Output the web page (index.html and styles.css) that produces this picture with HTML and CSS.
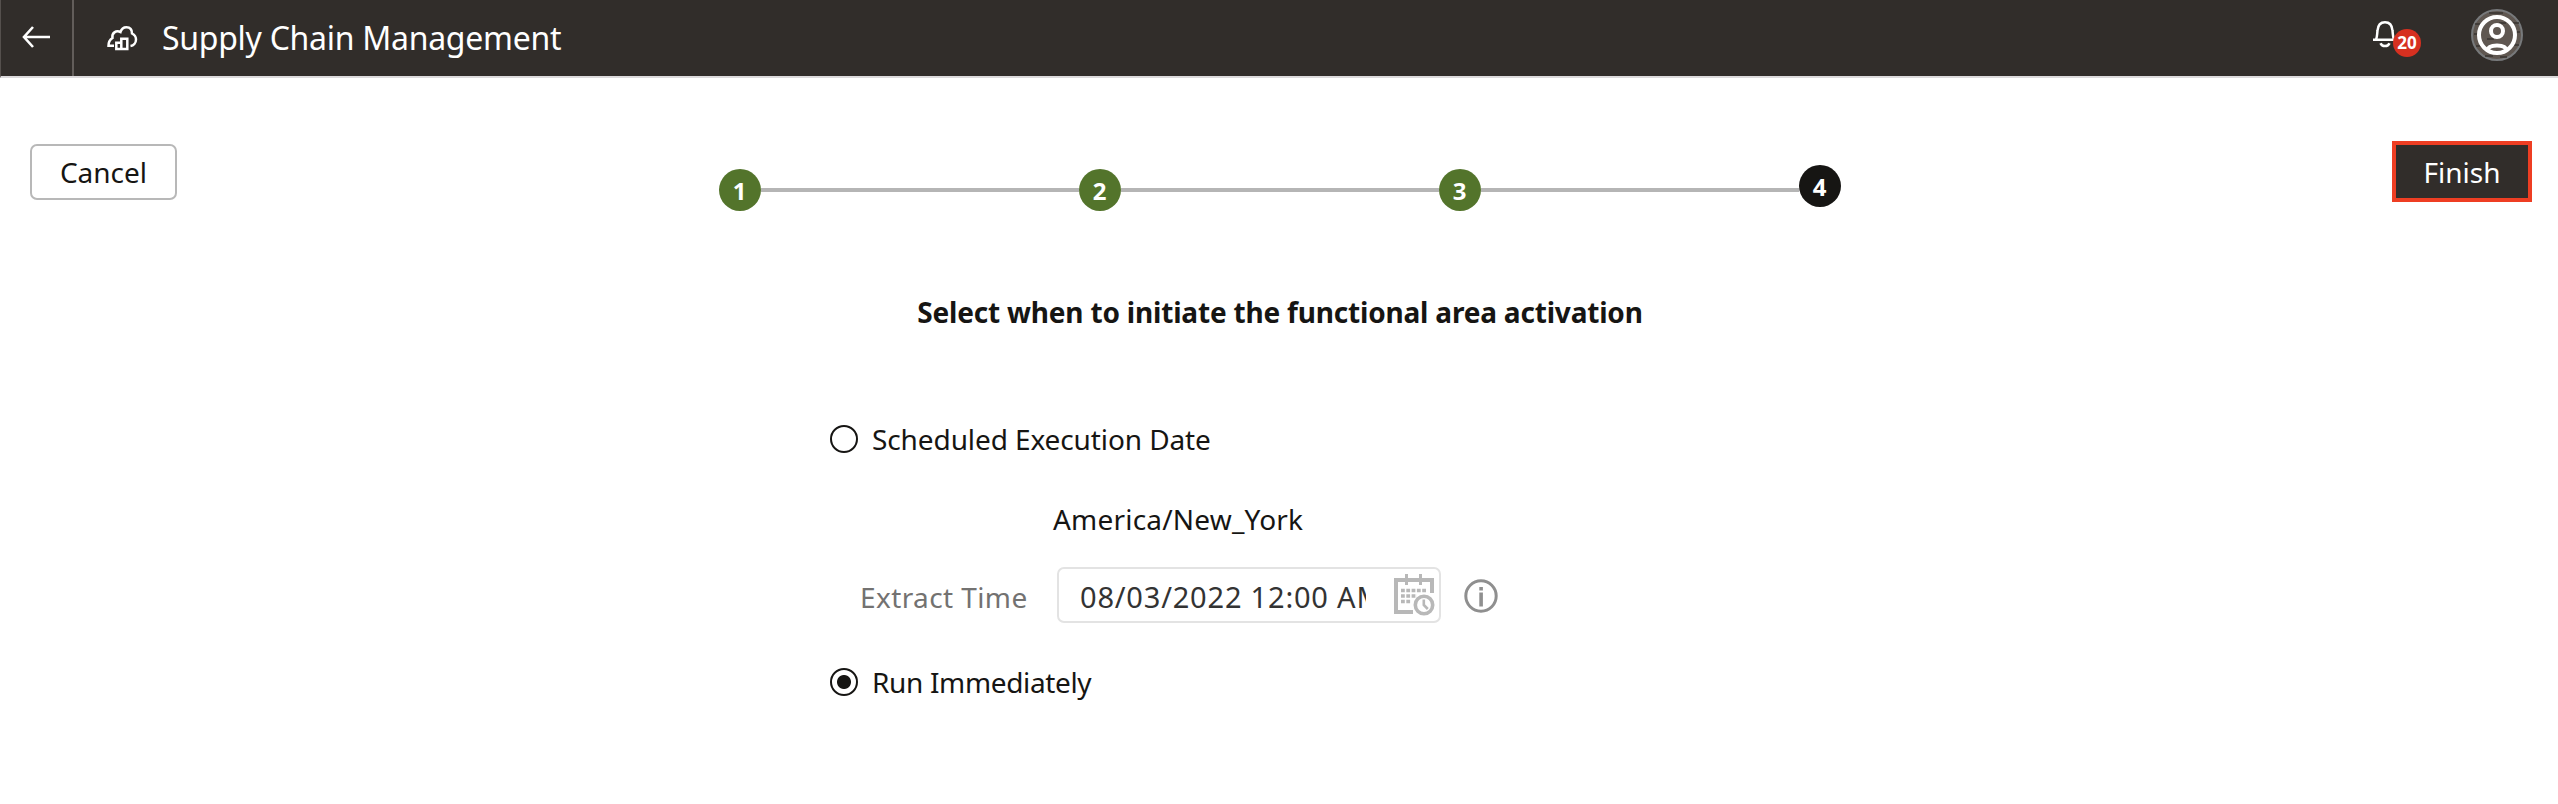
FILE: index.html
```html
<!DOCTYPE html>
<html lang="en">
<head>
<meta charset="utf-8">
<title>Supply Chain Management</title>
<link rel="stylesheet" href="styles.css">
</head>
<body>
<header class="topbar">
  <a class="back" aria-label="Back"><svg width="30" height="24" viewBox="0 0 30 24"><path d="M12 2 3 12l9 10M3 12h26" fill="none" stroke="#fff" stroke-width="2.600"/></svg></a>
  <svg class="logo" width="32" height="28" viewBox="0 0 32 28"><g fill="none" stroke="#fff" stroke-width="2.500"><path d="M8 21.800H2.500c0-4 1.500-6.300 4-7.800C5.500 9 10 6 14.500 8 15.500 4.500 18 3.200 20.500 3.200c3.500 0 5.500 2.300 5.500 6.300 3 1.500 4 3.500 4 6 0 3.500-2.500 6-5.500 6.500"/><path d="M10.300 25v-6.200h5V25zM15.300 25V14.800h6V25z"/></g></svg>
  <h1 class="title">Supply Chain Management</h1>
  <div class="tools">
    <div class="bell"><svg width="24" height="30" viewBox="0 0 24 30"><path d="M0 18.700h23M3 18.500c1.300-2.500 1-5 1.500-9C5 4 8 1.300 12 1.300S19 4 19.500 9.500c.5 4 .2 6.500 1.500 9M7.500 22.200c.8 2 2.500 2.900 4.500 2.900s3.700-.9 4.500-2.900" fill="none" stroke="#fff" stroke-width="2.500"/></svg><span class="badge">20</span></div>
    <svg class="avatar" width="52" height="52" viewBox="0 0 52 52"><circle cx="26" cy="26" r="25" fill="#5f5751" stroke="#77797b" stroke-width="2"/><path d="M18 4h14M4 15h8M40 14h8M3 25h7M42 23h7M5 37h6M41 36h7M16 30h7M28 14h7M14 47h8M29 48h7" stroke="#393431" stroke-width="1.300"/><g fill="none" stroke="#fff" stroke-width="4"><circle cx="26" cy="26" r="18"/><circle cx="26" cy="22" r="6"/><path d="M17 41c0-3 3-4.500 9-4.500s9 1.500 9 4.500"/></g></svg>
  </div>
</header>
<main>
  <div class="wizard">
    <button class="cancel">Cancel</button>
    <ol class="steps"><li class="step">1</li><li class="line"></li><li class="step">2</li><li class="line"></li><li class="step">3</li><li class="line"></li><li class="step current">4</li></ol>
    <button class="finish">Finish</button>
  </div>
  <h2 class="heading">Select when to initiate the functional area activation</h2>
  <form class="form">
    <label class="option"><i class="radio"></i><span class="scheduled">Scheduled Execution Date</span></label>
    <div class="zone">America/New_York</div>
    <div class="extract">
      <span class="label">Extract Time</span>
      <div class="field"><span class="value">08/03/2022 12:00 AM</span>
        <svg class="calendar" width="42" height="42" viewBox="0 0 42 42"><path d="M19 38H2V6h36v13" fill="none" stroke="#b8b8b8" stroke-width="4"/><path d="M0 4h40v4H0zM11 0h3v11h-3zM25 0h3v11h-3z" fill="#b8b8b8"/><path d="M7 16.500h26M7 22h16M7 27.500h10" stroke="#b8b8b8" stroke-width="3.500" stroke-dasharray="3.800 1.500"/><circle cx="30" cy="31" r="8.700" fill="#fff" stroke="#b8b8b8" stroke-width="3.600"/><path d="M29.800 25.500V31l4 4" fill="none" stroke="#b8b8b8" stroke-width="2.600"/></svg>
      </div>
      <svg class="info" width="34" height="34" viewBox="0 0 34 34"><circle cx="17" cy="17" r="15.200" fill="none" stroke="#8f8f8f" stroke-width="3"/><path d="M15.300 13.500h3.600v14h-3.600zM15.300 8h3.600v3.500h-3.600z" fill="#8f8f8f"/></svg>
    </div>
    <label class="option run"><i class="radio on"></i><span class="immediate">Run Immediately</span></label>
  </form>
</main>
</body>
</html>
```
FILE: styles.css
```css
*{box-sizing:border-box}
body{margin:0;height:804px;background:#fff;color:#161513;font:28px/40px "Noto Sans",sans-serif;overflow:hidden}
svg{display:block;flex:none}
.topbar{display:flex;align-items:center;height:78px;background:#312d2a;border-bottom:2px solid #dcdadc;border-left:1px solid #55504d}
.back{display:flex;align-items:center;width:73px;height:76px;padding:0 0 2px 20px;border-right:2px solid #625d5a}
.logo{margin-left:32px}
.title{margin:0 0 0 24px;font-size:32px;font-weight:400;letter-spacing:-.28px;color:#fff;white-space:nowrap}
.tools{margin-left:auto;display:flex;align-items:center}
.bell{position:relative;width:50px;height:30px;margin-bottom:4px}
.badge{position:absolute;left:20px;top:8px;width:28px;height:28px;border-radius:50%;background:#d63020;color:#fff;font:bold 17px/28px "Noto Sans",sans-serif;text-align:center}
.avatar{margin:0 35px 6px 48px}
.wizard{display:flex;justify-content:space-between;align-items:flex-start;height:146px;padding:63px 26px 0 30px}
button{font:inherit;padding:0}
.cancel{width:147px;height:56px;margin-top:3px;border:2px solid #b8b8b8;border-radius:7px;background:#fff;color:#161513}
.finish{width:140px;height:61px;border:4px solid #ee3e23;background:#312d2a;color:#fff}
.steps{display:flex;align-items:center;margin:24px 10px 0 0;padding:0;list-style:none}
.step{width:42px;height:42px;border-radius:50%;background:#53742b;color:#fff;font-size:24px;font-weight:700;line-height:43px;text-align:center}
.current{background:#161513;margin-bottom:8px}
.line{width:318px;height:4px;background:#b5b5b5}
.heading{margin:68px 0 0;padding-left:2px;font-size:28px;line-height:40px;letter-spacing:-.19px;text-align:center}
.form{width:800px;margin:87px 0 0 830px}
.option{display:flex;align-items:center;gap:14px;height:40px}
.radio{width:28px;height:28px;border:2px solid #161513;border-radius:50%}
.on{background:radial-gradient(circle,#161513 6.500px,transparent 7.500px)}
.scheduled{letter-spacing:-.1px}
.immediate{letter-spacing:-.35px}
.zone{margin:40px 0 0 223px;letter-spacing:.2px}
.extract{display:flex;align-items:center;height:56px;margin-top:28px;padding-left:30px}
.label{width:197px;padding-top:3px;letter-spacing:.4px;color:#737271}
.field{display:flex;align-items:center;width:384px;height:56px;border:2px solid #e3e3e3;border-radius:7px;padding-left:21px}
.value{width:286px;padding-top:3px;overflow:hidden;white-space:nowrap;font-size:29px;letter-spacing:.8px;color:#333}
.calendar{margin-left:28px}
.info{margin:2px 0 0 23px}
.run{margin-top:39px}
```
